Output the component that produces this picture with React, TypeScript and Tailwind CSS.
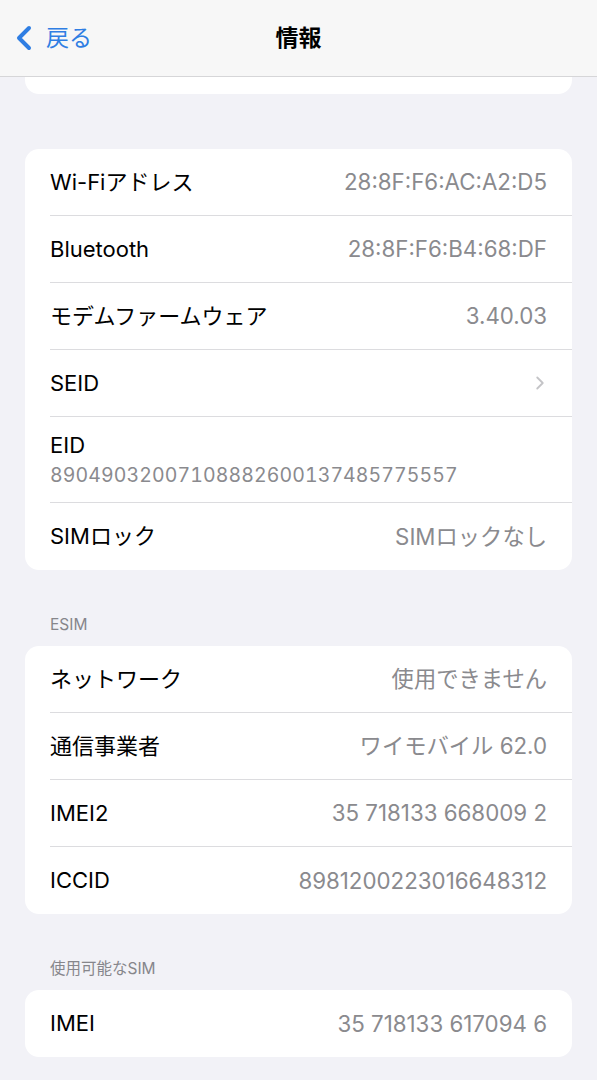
import { ChevronLeft, ChevronRight } from 'lucide-react';

type Row = { label: string; value?: string; chevron?: boolean; sub?: string };

const deviceRows: Row[] = [
  { label: 'Wi-Fiアドレス', value: '28:8F:F6:AC:A2:D5' },
  { label: 'Bluetooth', value: '28:8F:F6:B4:68:DF' },
  { label: 'モデムファームウェア', value: '3.40.03' },
  { label: 'SEID', chevron: true },
  { label: 'EID', sub: '89049032007108882600137485775557' },
  { label: 'SIMロック', value: 'SIMロックなし' },
];

const esimRows: Row[] = [
  { label: 'ネットワーク', value: '使用できません' },
  { label: '通信事業者', value: 'ワイモバイル 62.0' },
  { label: 'IMEI2', value: '35 718133 668009 2' },
  { label: 'ICCID', value: '8981200223016648312' },
];

const simRows: Row[] = [{ label: 'IMEI', value: '35 718133 617094 6' }];

function Card({ rows }: { rows: Row[] }) {
  return (
    <div className="mx-[25px] rounded-[14px] bg-white overflow-hidden">
      {rows.map((r, i) => {
        const line = i < rows.length - 1 ? 'border-b border-[#dcdcdf]' : '';
        return (
          <div key={r.label} className="pl-[25px]">
            {r.sub ? (
              <div className={`h-[86px] pr-[25px] pt-[14px] ${line}`}>
                <p className="text-[22px] leading-[28px] text-black">{r.label}</p>
                <p className="text-[19.5px] leading-[26px] text-[#8a8a8e] tabular-nums tracking-[0.1px] mt-[3px]">{r.sub}</p>
              </div>
            ) : (
              <div className={`h-[67px] pr-[25px] flex items-center justify-between ${line}`}>
                <span className="text-[22px] text-black">{r.label}</span>
                {r.value && <span className="text-[22.3px] text-[#8a8a8e]">{r.value}</span>}
                {r.chevron && <ChevronRight size={22} strokeWidth={2} className="text-[#c4c4c7] -mr-[4px]" />}
              </div>
            )}
          </div>
        );
      })}
    </div>
  );
}

function SectionHeader({ title }: { title: string }) {
  return <p className="px-[50px] pt-[45px] pb-[11px] text-[15.5px] leading-[20px] text-[#86868b]">{title}</p>;
}

export default function App() {
  return (
    <div
      className="w-[597px] h-[1080px] bg-[#f2f2f7] overflow-hidden"
      style={{ fontFamily: 'Inter, "Noto Sans CJK JP", sans-serif' }}
    >
      {/* nav bar */}
      <div className="h-[77px] bg-[#f7f7f7] border-b border-[#d6d6d8] relative flex items-center">
        <div className="flex items-center pl-[4px] text-[#2f7ee3]">
          <ChevronLeft size={40} strokeWidth={2.4} />
          <span className="text-[23px] ml-[2px]">戻る</span>
        </div>
        <p className="absolute left-0 right-0 text-center text-[23px] font-bold text-black">情報</p>
      </div>

      {/* bottom of previous card */}
      <div className="mx-[25px] h-[17px] rounded-b-[14px] bg-white" />

      <div className="h-[55px]" />
      <Card rows={deviceRows} />

      <SectionHeader title="ESIM" />
      <Card rows={esimRows} />

      <SectionHeader title="使用可能なSIM" />
      <Card rows={simRows} />
    </div>
  );
}
